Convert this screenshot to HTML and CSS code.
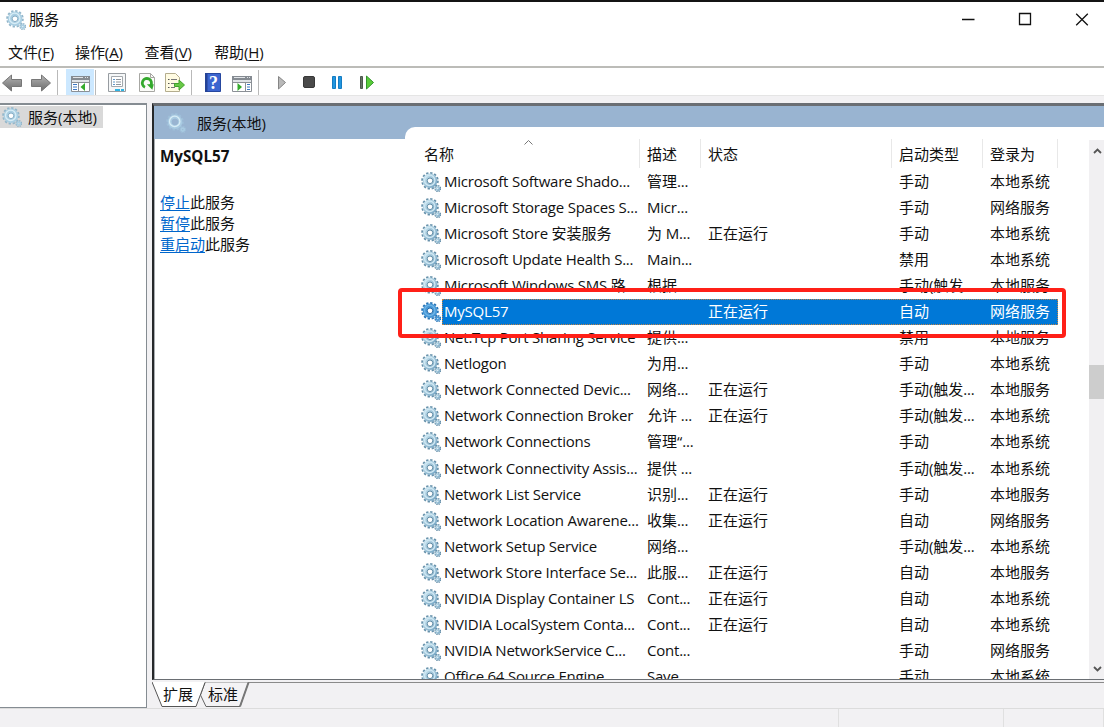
FILE: index.html
```html
<!DOCTYPE html>
<html lang="zh-CN">
<head>
  <meta charset="UTF-8">
  <title>服务</title>
  <link rel="stylesheet" href="styles.css">
</head>
<body>

  <svg class="defs" width="0" height="0">
    <defs>
      <linearGradient id="steel" x1="0" y1="0" x2="1" y2="1">
        <stop offset="0" stop-color="#c3dfec"/>
        <stop offset="1" stop-color="#7ba9c6"/>
      </linearGradient>
      <linearGradient id="gray" x1="0" y1="0" x2="0" y2="1">
        <stop offset="0" stop-color="#b5b5b5"/>
        <stop offset="1" stop-color="#6c6c6c"/>
      </linearGradient>
    </defs>
    <symbol id="gear" viewBox="0 0 20 20">
      <circle class="teeth" cx="9" cy="8.8" r="7.8" stroke-width="2" stroke-dasharray="2.3 1.78"/>
      <circle class="ring" cx="9" cy="8.8" r="5.1" stroke-width="4.4"/>
      <circle class="shine" cx="8.7" cy="8.4" r="5.2" stroke-width="1.3"/>
      <circle class="hub" cx="9" cy="8.8" r="2.8" stroke-width="1"/>
      <circle class="teeth" cx="16.8" cy="16.6" r="2.7" stroke-width="1.6" stroke-dasharray="1.3 .82"/>
      <circle class="ring" cx="16.8" cy="16.6" r="1.5" stroke-width="1.8"/>
    </symbol>
  </svg>

  <div class="window">
    <header class="titlebar">
      <svg class="gear pale"><use href="#gear"/></svg>
      <span class="title">服务</span>
      <svg class="controls" width="118" height="16" viewBox="0 0 118 16">
        <path d="M2 7.500h12.500M59.500 1.500h11v11h-11z"/>
      </svg>
      <svg class="close" width="14" height="14" viewBox="0 0 14 14"><path d="M1.200 .7l11.600 11.600M12.800 .7L1.200 12.300"/></svg>
    </header>

    <nav class="menu">
      <span>文件(<u>F</u>)</span>
      <span>操作(<u>A</u>)</span>
      <span>查看(<u>V</u>)</span>
      <span>帮助(<u>H</u>)</span>
    </nav>

    <div class="toolbar">
      <svg width="400" height="28" viewBox="0 0 400 28">
        <!-- back / forward -->
        <g fill="url(#gray)" stroke="#777" stroke-width="1">
          <path d="M2.500 15L11.500 7v4.500h10v7h-10V23z"/>
          <path d="M50.500 15L41.500 7v4.500h-10v7h10V23z"/>
        </g>
        <path d="M57.500 2v25M95.500 2v25M191.500 2v25M258.500 2v25" stroke="#b9b9b9"/>
        <!-- console tree -->
        <path fill="#cce8ff" d="M66 1h28v26H66z"/>
        <g>
          <path fill="#fff" stroke="#8b9096" d="M71.500 8.500h18v15h-18z"/>
          <path fill="#858b92" d="M71 8h19v4H71z"/>
          <path fill="#e1e4e8" d="M73 9h10v1H73zM85 9h1v1h-1zM87 9h1v1h-1zM72 12h17v2H72z"/>
          <path stroke="#8b9096" d="M71 14.500h19M78.500 14v9"/>
          <path stroke="#3d78c4" d="M73 16.500h4M73 19h4M73 21.500h4"/>
          <path fill="#35ab2c" d="M80.500 19l4.500-4v8z"/>
        </g>
        <!-- properties -->
        <path fill="#f5f7f8" stroke="#979ca1" d="M108.500 5.500h17v18h-17z"/>
        <path fill="#fff" stroke="#a3a8ad" d="M111.500 8.500h11v10h-11z"/>
        <path stroke="#5f97c8" d="M113 11.500h2M113 14h2M113 16.500h2"/>
        <path stroke="#8d949b" d="M116 11.500h5M116 14h5M116 16.500h5"/>
        <path stroke="#2db5e5" stroke-width="2" d="M115 22h5M121 22h3"/>
        <!-- refresh -->
        <path fill="#fbfbf8" stroke="#a7a7a3" d="M139.500 5.500h11l4 4v14h-15z"/>
        <path fill="none" stroke="#a7a7a3" d="M150.500 5.500v4h4"/>
        <path fill="none" stroke="#33a82c" stroke-width="2.800" d="M145 19.300a4.600 4.600 0 1 1 5.800-1.800"/>
        <path fill="#33a82c" d="M146.800 16.300h7l-1.500 5.400z"/>
        <!-- export -->
        <path fill="#fffbe2" stroke="#b4ad8e" d="M165.500 5.500h10l4 4v14h-14z"/>
        <path stroke="#555" d="M168 11.500h1.500M168 15.500h1.500M168 19.500h1.500"/>
        <path stroke="#777" d="M171 11.500h6M171 15.500h4M171 19.500h4"/>
        <path fill="#68c846" stroke="#41a32b" d="M174.500 15.500h4.500v-3.500l5.500 5-5.500 5v-3.500h-4.500z"/>
        <!-- help -->
        <path fill="#3c65cf" stroke="#26479f" d="M205.500 5.500h15v18h-15z"/>
        <path fill="#254396" d="M205 5h2.500v19H205z"/>
        <text class="help" x="209" y="21">?</text>
        <!-- action pane -->
        <path fill="#fff" stroke="#8b9096" d="M232.500 8.500h19v15h-19z"/>
        <path fill="#858b92" d="M232 8h20v4h-20z"/>
        <path fill="#e1e4e8" d="M234 9h11v1h-11zM247 9h1v1h-1zM249 9h1v1h-1zM233 12h18v2h-18z"/>
        <path stroke="#8b9096" d="M232 14.500h20M245.500 14v9"/>
        <path stroke="#3d78c4" d="M247 16.500h3M247 19h3M247 21.500h3"/>
        <path fill="#35ab2c" d="M237.500 15l4.500 4-4.500 4z"/>
        <!-- start / stop / pause / restart -->
        <path fill="#b9b9b9" stroke="#858585" d="M278.500 8.500L285.500 14.500l-7 6.500z"/>
        <rect fill="#4a4a4a" stroke="#383838" x="303.500" y="8.500" width="11" height="11" rx="1.500"/>
        <path fill="#2196e0" stroke="#157cc2" d="M332.500 8.500h3v12h-3zM338.500 8.500h3v12h-3z"/>
        <path fill="#657365" stroke="#4c574c" d="M360.500 8.500h2v12h-2z"/>
        <path fill="#59cc38" stroke="#32962b" d="M366.500 8l7 6.500-7 6.500z"/>
      </svg>
    </div>

    <main class="work">
      <aside class="tree">
        <div class="node"><svg class="gear pale"><use href="#gear"/></svg><span>服务(本地)</span></div>
      </aside>

      <section class="right">
        <div class="pane">
          <div class="band">
            <svg class="gear pale"><use href="#gear"/></svg><span>服务(本地)</span>
          </div>
          <div class="content">
            <div class="detail">
              <h1>MySQL57</h1>
              <p><a>停止</a>此服务</p>
              <p><a>暂停</a>此服务</p>
              <p><a>重启动</a>此服务</p>
            </div>
            <div class="list">
              <div class="head">
                <span class="name">名称<svg class="sort" width="9" height="5" viewBox="0 0 9 5"><path d="M.5 4.500l4-4 4 4"/></svg></span>
                <span>描述</span><span>状态</span><span>启动类型</span><span>登录为</span>
              </div>
              <div class="rows" id="rows"></div>
              <div class="marker"></div>
            </div>
            <div class="scroll">
              <svg width="9" height="6" viewBox="0 0 9 6"><path d="M1 5l3.500-3.500L8 5"/></svg>
              <div class="thumb"></div>
              <svg width="9" height="6" viewBox="0 0 9 6"><path d="M1 1l3.500 3.500L8 1"/></svg>
            </div>
          </div>
        </div>
        <div class="tabs">
          <svg class="tabshape" width="100" height="26" viewBox="0 0 100 26">
            <path fill="#f4f3f5" stroke="#666" d="M53 .5L48.500 13 54 24.500H88L96.500 .5"/>
            <path stroke="#777" stroke-width="2" d="M88 24.500L96.500 .5"/>
            <path fill="#fff" d="M0 0h53L48.500 13 44 24.500H10z"/>
            <path fill="none" stroke="#555" d="M0 0l10 24.500h34L53 .5"/>
          </svg>
          <span>扩展</span><span>标准</span>
        </div>
      </section>
    </main>

    <footer class="status"><i></i><i></i><i></i></footer>
  </div>

  <script>
    const services = [
      ["Microsoft Software Shado...", "管理...", "", "手动", "本地系统"],
      ["Microsoft Storage Spaces S...", "Micr...", "", "手动", "网络服务"],
      ["Microsoft Store 安装服务", "为 M...", "正在运行", "手动", "本地系统"],
      ["Microsoft Update Health S...", "Main...", "", "禁用", "本地系统"],
      ["Microsoft Windows SMS 路", "根据", "", "手动(触发", "本地服务"],
      ["MySQL57", "", "正在运行", "自动", "网络服务"],
      ["Net.Tcp Port Sharing Service", "提供...", "", "禁用", "本地服务"],
      ["Netlogon", "为用...", "", "手动", "本地系统"],
      ["Network Connected Devic...", "网络...", "正在运行", "手动(触发...", "本地服务"],
      ["Network Connection Broker", "允许 ...", "正在运行", "手动(触发...", "本地系统"],
      ["Network Connections", "管理“...", "", "手动", "本地系统"],
      ["Network Connectivity Assis...", "提供 ...", "", "手动(触发...", "本地系统"],
      ["Network List Service", "识别...", "正在运行", "手动", "本地服务"],
      ["Network Location Awarene...", "收集...", "正在运行", "自动", "网络服务"],
      ["Network Setup Service", "网络...", "", "手动(触发...", "本地系统"],
      ["Network Store Interface Se...", "此服...", "正在运行", "自动", "本地服务"],
      ["NVIDIA Display Container LS", "Cont...", "正在运行", "自动", "本地系统"],
      ["NVIDIA LocalSystem Conta...", "Cont...", "正在运行", "自动", "本地系统"],
      ["NVIDIA NetworkService C...", "Cont...", "", "手动", "网络服务"],
      ["Office 64 Source Engine", "Save", "", "手动", "本地系统"]
    ];

    // CJK runs keep their natural spacing, the Latin text is tightened
    function mixed(text) {
      return text.replace(/[\u4e00-\u9fff“]+/g, "<b>$&</b>");
    }

    document.getElementById("rows").innerHTML = services.map(cells => `
      <div class="row${cells[0] === "MySQL57" ? " selected" : ""}">
        <svg class="gear"><use href="#gear"/></svg>
        <div class="cells">${cells.map(c => `<span>${mixed(c)}</span>`).join("")}</div>
      </div>`).join("");
  </script>

</body>
</html>
```
FILE: styles.css
```css
* { box-sizing: border-box; }
body {
  margin: 0;
  overflow: hidden;
  background: #fff;
  color: #111;
  font: 15px/20px "Open Sans", "Noto Sans CJK SC", sans-serif;
}
.defs { position: absolute; }
svg { display: block; flex: none; }
.window {
  width: 1104px;
  height: 727px;
  display: flex;
  flex-direction: column;
  border-top: 2px solid #141414;
}

.gear { width: 20px; height: 20px; }
.gear { --teeth: #6690aa; --ring: url(#steel); --shine: #d0e8f3; --hub: #5f8ba5; }
.gear.pale { --teeth: #93b6ca; --ring: #a9cee2; --shine: #d8edf6; --hub: #86adc5; }
.band .gear.pale { --teeth: #9fbfd9; --ring: #a9cbe2; --shine: #d8edf6; --hub: #99b4d1; --hole: #99b4d1; }
.selected .gear { --teeth: #2673b5; --ring: #4697d6; --shine: #70b5e6; --hub: #1e66a7; }
.teeth, .ring, .shine { fill: none; }
.teeth { stroke: var(--teeth); }
.ring { stroke: var(--ring); }
.shine { stroke: var(--shine); }
.hub { stroke: var(--hub); fill: var(--hole, #fff); }

.titlebar {
  height: 36px;
  display: flex;
  align-items: center;
  padding: 0 15px 0 6px;
}
.title { margin: -2px 0 0 3px; flex: 1; }
.controls { margin-right: -3px; }
.controls, .close { fill: none; stroke: #111; stroke-width: 1.3; }

.menu {
  height: 28px;
  display: flex;
  gap: 20px;
  padding: 4px 0 0 8px;
  font-size: 15px;
}
.menu span { width: 49.6px; white-space: nowrap; letter-spacing: -.1px; }
.menu span:first-child { width: 47px; }
.menu u { text-underline-offset: 2px; }
.toolbar {
  height: 30px;
  border-top: 2px solid #bcbcb8;
  border-bottom: 1px solid #e5e5e5;
}
.help { fill: #fff; font: bold 18px "Liberation Serif", serif; }

.work {
  height: 612px;
  padding-top: 7px;
  display: flex;
  background: #f2f1f3;
}
.tree {
  width: 147px;
  height: 605px;
  margin-right: 5px;
  padding-top: 1px;
  background: #fff;
  border: solid #858c92;
  border-width: 2px 1px 1px 0;
}
.node {
  width: 103px;
  height: 22px;
  display: flex;
  align-items: center;
  padding-left: 2px;
  background: #d9d9d9;
  white-space: nowrap;
}
.node span { margin-left: 6px; }
.right { flex: 1; min-width: 0; }
.pane {
  height: 577px;
  background: #fff;
  border: solid #6a6e73;
  border-width: 3px 0 1px 2px;
  border-left-color: #26282a;
  box-shadow: inset 1px 0 #a9adb1;
}
.band {
  height: 33px;
  display: flex;
  align-items: center;
  padding-left: 12px;
  background: #99b4d1;
}
.band span { margin-left: 11px; }
.content { height: 540px; display: flex; }
.detail { width: 251px; padding: 7px 0 0 6px; }
h1 { margin: 0 0 26px; font-size: 15.2px; line-height: 20px; }
p { margin: 0; line-height: 21px; }
a { color: #0066cc; text-decoration: underline; text-underline-offset: 2px; }

.list {
  position: relative;
  width: 684px;
  height: 552px;
  margin-top: -12px;
  padding-top: 12px;
  background: #fff;
  border-top-left-radius: 10px;
}
.head {
  height: 30px;
  display: grid;
  grid-template-columns: 235px 61px 191px 91px 75px;
}
.head span {
  height: 29px;
  padding: 5px 0 0 7px;
  border-right: 1px solid #e8e8e8;
}
.head .name { padding-left: 19px; position: relative; }
.sort { position: absolute; left: 119px; top: 1px; fill: none; stroke: #777; }
.rows { height: 510px; overflow: hidden; }
.row {
  height: 26.05px;
  display: flex;
  align-items: center;
  padding-left: 16px;
}
.cells {
  width: 616px;
  height: 26px;
  display: grid;
  grid-template-columns: 203px 61px 191px 91px 70px;
  align-items: center;
  margin-left: 1px;
  padding-bottom: 1px;
  letter-spacing: -.22px;
  white-space: nowrap;
}
.cells span { padding-left: 2px; line-height: 19px; }
.cells b { letter-spacing: 0; font-weight: normal; }
.selected .cells { background: #0078d7; color: #fff; outline: 1px dotted #c08447; outline-offset: -1px; }
.marker {
  position: absolute;
  left: -7px;
  top: 161px;
  width: 668px;
  height: 50px;
  border: 4px solid #ff2018;
  border-radius: 4px;
}
.scroll {
  flex: 1;
  display: flex;
  flex-direction: column;
  justify-content: space-between;
  margin-top: -12px;
  padding: 8px 0 7px;
  background: #f1f0f2;
  border-top: 13px solid #fff;
}
.scroll svg { margin-left: 4px; fill: none; stroke: #555; stroke-width: 1.8; }
.thumb { height: 34px; margin-bottom: 56px; background: #cdcdcd; }

.tabs {
  position: relative;
  height: 28px;
  margin-top: 2px;
  padding: 1px 0 0 11px;
  display: flex;
  gap: 15px;
  border-top: 1px solid #8a8a8a;
}
.tabs span { position: relative; }
.tabshape { position: absolute; left: 0; top: -1px; }

.status {
  height: 19px;
  display: grid;
  grid-template-columns: 839px 165px 1fr;
  background: #f2f1f3;
  border-top: 1px solid #dcdcdc;
}
.status i { border-right: 1px solid #e0e0e0; }
```
